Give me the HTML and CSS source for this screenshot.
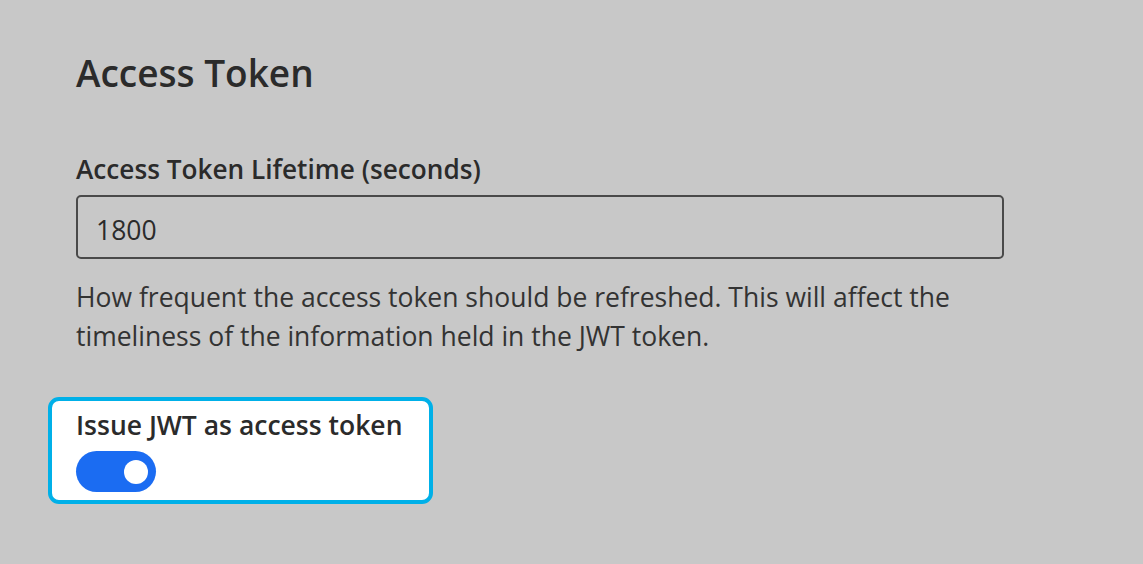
FILE: index.html
```html
<!DOCTYPE html>
<html lang="en">
<head>
<meta charset="utf-8">
<title>Access Token</title>
<link rel="stylesheet" href="styles.css">
</head>
<body>
<main class="section">
  <h2 class="title">Access Token</h2>
  <div class="field">
    <label class="label" for="lifetime">Access Token Lifetime (seconds)</label>
    <input class="input" id="lifetime" type="text" value="1800">
    <p class="hint">How frequent the access token should be refreshed. This will affect the timeliness of the information held in the JWT token.</p>
  </div>
  <div class="highlight">
    <div class="label">Issue JWT as access token</div>
    <div class="toggle"><span class="knob"></span></div>
  </div>
</main>
</body>
</html>
```
FILE: styles.css
```css
html, body {
  margin: 0;
  padding: 0;
  background: #c8c8c8;
  width: 1143px;
  height: 564px;
  overflow: hidden;
}
body {
  font-family: "Open Sans", "Noto Sans", sans-serif;
  color: #2b2b2b;
}
.section {
  padding: 48px 0 0 76px;
  display: flex;
  flex-direction: column;
  align-items: flex-start;
}
.title {
  margin: 0;
  font-size: 37px;
  font-weight: 600;
  line-height: 50px;
}
.field {
  margin-top: 55px;
  display: flex;
  flex-direction: column;
}
.label {
  font-size: 26.2px;
  font-weight: 600;
  line-height: 32px;
}
.input {
  margin-top: 10px;
  box-sizing: border-box;
  width: 928px;
  height: 64px;
  border: 2px solid #4a4a4a;
  border-radius: 5px;
  background: transparent;
  padding: 5px 18px 0;
  font-family: inherit;
  font-size: 26.5px;
  color: #2b2b2b;
  outline: none;
}
.hint {
  margin: 19px 0 0;
  width: 928px;
  font-size: 26.5px;
  line-height: 39px;
  color: #333;
}
.highlight {
  margin: 41px 0 0 -28px;
  box-sizing: border-box;
  width: 385px;
  height: 107px;
  background: #fff;
  border: 4px solid #00b0e8;
  border-radius: 11px;
  padding: 8px 0 0 24px;
  display: flex;
  flex-direction: column;
}
.highlight .label {
  font-size: 26.5px;
}
.toggle {
  margin-top: 10px;
  width: 80px;
  height: 41px;
  border-radius: 21px;
  background: #1b6cf2;
  display: flex;
  align-items: center;
  justify-content: flex-end;
  padding-right: 8px;
  box-sizing: border-box;
}
.knob {
  width: 24px;
  height: 24px;
  border-radius: 50%;
  background: #fff;
}
```
